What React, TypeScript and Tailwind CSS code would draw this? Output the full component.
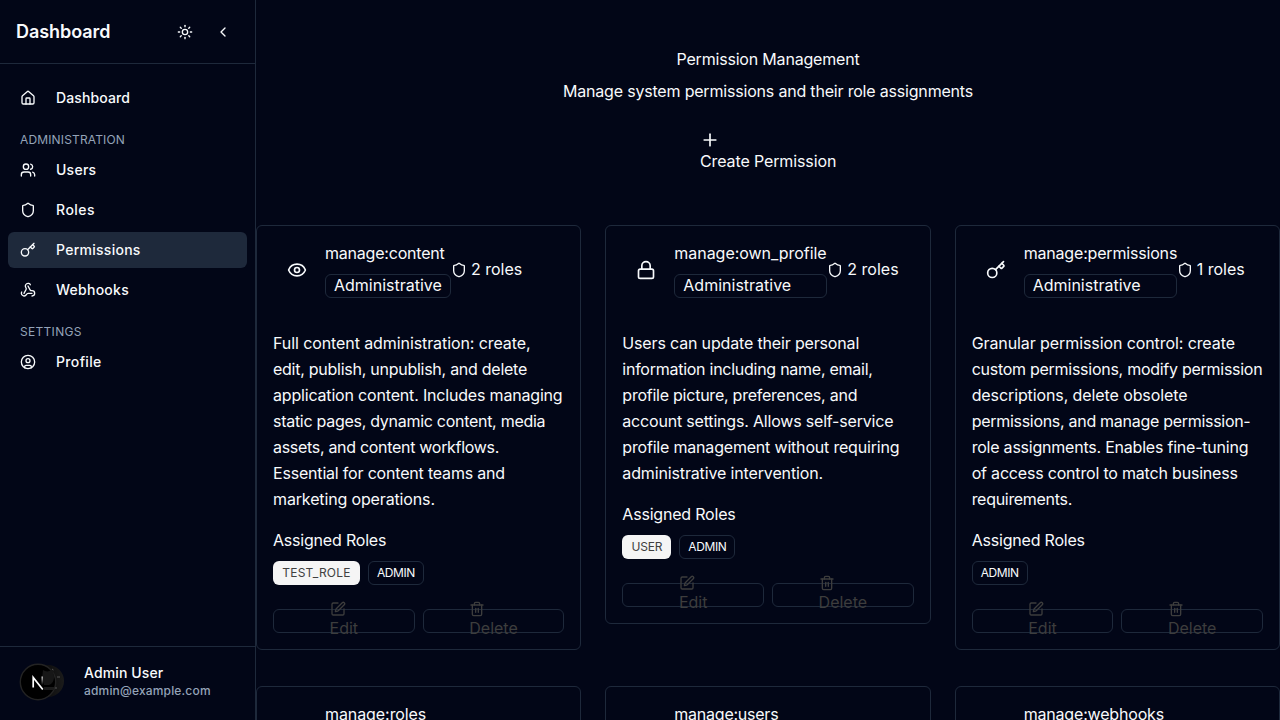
import { Sun, ChevronLeft, House, Users, Shield, Key, Webhook, CircleUser, Eye, Lock, Plus, SquarePen, Trash2, type LucideIcon } from "lucide-react";

type NavItem = { label: string; icon: LucideIcon; tracking: string; active?: boolean };

const NAV: { title?: string; tracking?: string; items: NavItem[] }[] = [
  { items: [{ label: "Dashboard", icon: House, tracking: "tracking-[0.12px]" }] },
  {
    title: "ADMINISTRATION",
    tracking: "tracking-[0.15px]",
    items: [
      { label: "Users", icon: Users, tracking: "tracking-[0.25px]" },
      { label: "Roles", icon: Shield, tracking: "tracking-[0.5px]" },
      { label: "Permissions", icon: Key, tracking: "tracking-[0.27px]", active: true },
      { label: "Webhooks", icon: Webhook, tracking: "tracking-[0.25px]" },
    ],
  },
  {
    title: "SETTINGS",
    tracking: "tracking-[0.3px]",
    items: [{ label: "Profile", icon: CircleUser, tracking: "tracking-[0.35px]" }],
  },
];

type Permission = {
  name: string;
  icon: LucideIcon;
  nameClass: string;
  columnWidth: string;
  count: number;
  lines: [string, string][];
  roles: string[];
};

const PERMISSIONS: Permission[] = [
  {
    name: "manage:content",
    icon: Eye,
    nameClass: "tracking-[-0.21px]",
    columnWidth: "w-[126px]",
    count: 2,
    lines: [
      ["Full content administration: create,", "tracking-[-0.09px]"],
      ["edit, publish, unpublish, and delete", "tracking-[-0.26px]"],
      ["application content. Includes managing", "tracking-[-0.18px]"],
      ["static pages, dynamic content, media", "tracking-[-0.28px]"],
      ["assets, and content workflows.", "tracking-[-0.3px]"],
      ["Essential for content teams and", "tracking-[-0.19px]"],
      ["marketing operations.", "tracking-[-0.14px]"],
    ],
    roles: ["TEST_ROLE", "ADMIN"],
  },
  {
    name: "manage:own_profile",
    icon: Lock,
    nameClass: "tracking-[-0.04px]",
    columnWidth: "w-[153px]",
    count: 2,
    lines: [
      ["Users can update their personal", "tracking-[-0.16px]"],
      ["information including name, email,", "tracking-[-0.26px]"],
      ["profile picture, preferences, and", "tracking-[-0.24px]"],
      ["account settings. Allows self-service", "tracking-[-0.19px]"],
      ["profile management without requiring", "tracking-[-0.19px]"],
      ["administrative intervention.", "tracking-[-0.14px]"],
    ],
    roles: ["USER", "ADMIN"],
  },
  {
    name: "manage:permissions",
    icon: Key,
    nameClass: "tracking-[-0.18px]",
    columnWidth: "w-[153px]",
    count: 1,
    lines: [
      ["Granular permission control: create", "tracking-[-0.09px]"],
      ["custom permissions, modify permission", "tracking-[-0.27px]"],
      ["descriptions, delete obsolete", "tracking-[-0.1px]"],
      ["permissions, and manage permission-", "tracking-[-0.29px]"],
      ["role assignments. Enables fine-tuning", "tracking-[-0.22px]"],
      ["of access control to match business", "tracking-[-0.19px]"],
      ["requirements.", "tracking-[-0.3px]"],
    ],
    roles: ["ADMIN"],
  },
];

const NEXT_ROW = [
  { name: "manage:roles", nameClass: "tracking-[-0.08px]" },
  { name: "manage:users", nameClass: "tracking-[-0.24px]" },
  { name: "manage:webhooks", nameClass: "tracking-[-0.18px]" },
];

const ROLE_CLASS: Record<string, string> = {
  TEST_ROLE: "w-[87px] bg-[#f5f5f5] text-[#404040] tracking-[0.2px]",
  USER: "w-[49px] bg-[#f5f5f5] text-[#404040] tracking-[-0.2px]",
  ADMIN: "w-14 border border-[#1e293b] tracking-[-0.4px]",
};

function ActionButton({ icon: Icon, label }: { icon: LucideIcon; label: string }) {
  return (
    <div className="flex h-6 items-center justify-center rounded-md border border-[#1e293b]">
      <div>
        <Icon className="size-4" />
        <div className="pb-0.5 leading-[22px]">{label}</div>
      </div>
    </div>
  );
}

function PermissionCard({ p }: { p: Permission }) {
  const Icon = p.icon;
  return (
    <div className="rounded-md border border-[#1e293b] p-4">
      <div className="flex h-14 items-center pl-[14px]">
        <Icon className="mr-[18px] size-5 shrink-0" />
        <div className={`${p.columnWidth} shrink-0`}>
          <div className={`leading-[22px] whitespace-nowrap ${p.nameClass}`}>{p.name}</div>
          <div className="mt-2.5 flex h-6 items-center rounded-md border border-[#1e293b] px-2 pb-0.5">Administrative</div>
        </div>
        <Shield className="size-4 shrink-0" />
        <div className="ml-1 pb-0.5 whitespace-nowrap">{p.count} roles</div>
      </div>
      <div className="mt-8 leading-[26px] whitespace-nowrap">
        {p.lines.map(([text, tracking]) => (
          <div key={text} className={tracking}>{text}</div>
        ))}
      </div>
      <div className="mt-4 leading-6 tracking-[-0.2px]">Assigned Roles</div>
      <div className="mt-[9px] flex gap-2 text-xs">
        {p.roles.map((r) => (
          <div key={r} className={`flex h-6 items-center justify-center rounded-md ${ROLE_CLASS[r]}`}>{r}</div>
        ))}
      </div>
      <div className="mt-6 grid grid-cols-2 gap-2 text-[#3d3d3d]">
        <ActionButton icon={SquarePen} label="Edit" />
        <ActionButton icon={Trash2} label="Delete" />
      </div>
    </div>
  );
}

function Avatar() {
  return (
    <svg width="48" height="44" viewBox="0 0 48 44" fill="none">
      <defs>
        <linearGradient id="stem" x1="0" y1="16" x2="0" y2="25" gradientUnits="userSpaceOnUse">
          <stop stopColor="#fff" stopOpacity="0.75" />
          <stop offset="1" stopColor="#fff" stopOpacity="0" />
        </linearGradient>
        <linearGradient id="side" x1="20" y1="0" x2="45" y2="0" gradientUnits="userSpaceOnUse">
          <stop stopColor="#080808" />
          <stop offset="1" stopColor="#1b1b1b" />
        </linearGradient>
      </defs>
      <circle cx="29" cy="21" r="16" fill="url(#side)" />
      <circle cx="19" cy="22" r="17.7" fill="#000" stroke="#232323" strokeWidth="1.4" />
      <path d="M24 10c3 2 6 2 10-1l1 8c0 4-2 7-5 8h-5l-2-6z" fill="#171717" />
      <path d="M25 27h10v3H25z" fill="#1b1b1b" />
      <path d="M33 9l1.5 1M38 17h3M36 28h2" stroke="#555" strokeWidth="1" />
      <path d="M14.2 27.5V17.5L23.8 29.5" stroke="#fff" strokeWidth="1.7" />
      <path d="M23.2 16.5V25" stroke="url(#stem)" strokeWidth="1.6" />
    </svg>
  );
}

export default function App() {
  return (
    <div className="flex h-[720px] w-[1280px] overflow-hidden bg-[#020617] font-['Inter',sans-serif] text-base text-[#f8fafc]">
      <aside className="flex w-64 shrink-0 flex-col border-r border-[#1e293b]">
        <div className="flex h-16 items-center border-b border-[#1e293b] pl-4">
          <div className="flex-1 pt-px text-lg font-semibold tracking-[-0.06px]">Dashboard</div>
          <Sun className="mr-[22px] size-4" />
          <ChevronLeft className="mr-6 size-4" />
        </div>
        <nav className="flex-1 px-2 pt-4">
          {NAV.map((group, i) => (
            <div key={i}>
              {group.title && (
                <div className={`mt-4 mb-1 flex h-4 items-center pl-3 text-xs text-[#94a3b8] ${group.tracking}`}>{group.title}</div>
              )}
              <div className="flex flex-col gap-1">
                {group.items.map(({ label, icon: Icon, tracking, active }) => (
                  <div key={label} className={`flex h-9 items-center gap-5 rounded-md pl-3 text-sm font-medium ${tracking} ${active ? "bg-[#1e293b]" : ""}`}>
                    <Icon className="size-4" />
                    {label}
                  </div>
                ))}
              </div>
            </div>
          ))}
        </nav>
        <div className="flex h-[74px] gap-[17px] border-t border-[#1e293b] pl-[19px]">
          <div className="pt-[13px]">
            <Avatar />
          </div>
          <div className="pt-4">
            <div className="text-sm leading-5 font-medium tracking-[0.12px]">Admin User</div>
            <div className="text-xs leading-4 font-medium tracking-[0.17px] text-[#94a3b8]">admin@example.com</div>
          </div>
        </div>
      </aside>
      <main className="flex min-w-0 flex-1 flex-col">
        <div className="flex flex-col items-center pt-12">
          <div className="leading-[22px] tracking-[-0.19px]">Permission Management</div>
          <div className="mt-2.5 leading-[22px] tracking-[-0.19px]">Manage system permissions and their role assignments</div>
          <div className="mt-7 w-[136px]">
            <Plus className="size-5" />
            <div className="leading-[22px] tracking-[-0.12px] whitespace-nowrap">Create Permission</div>
          </div>
        </div>
        <div className="mt-[53px] grid grid-cols-3 items-start gap-x-6 gap-y-9">
          {PERMISSIONS.map((p) => (
            <PermissionCard key={p.name} p={p} />
          ))}
          {NEXT_ROW.map((p) => (
            <div key={p.name} className="h-[425px] rounded-md border border-[#1e293b] py-4 pl-[68px]">
              <div className={`leading-[22px] ${p.nameClass}`}>{p.name}</div>
            </div>
          ))}
        </div>
      </main>
    </div>
  );
}
